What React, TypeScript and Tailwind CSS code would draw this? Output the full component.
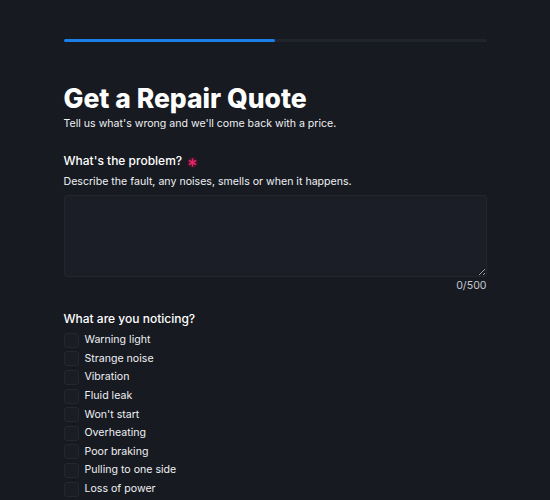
import React from "react";

const items = [
  "Warning light",
  "Strange noise",
  "Vibration",
  "Fluid leak",
  "Won't start",
  "Overheating",
  "Poor braking",
  "Pulling to one side",
  "Loss of power",
];

export default function App() {
  return (
    <div
      className="min-h-screen bg-[#171a21] text-[#f3f4f6]"
      style={{ fontFamily: "Inter, 'Liberation Sans', sans-serif" }}
    >
      <div className="mx-auto w-[423px] pt-[39px] pb-10">
        <div className="h-[3px] w-full rounded-full bg-[#20242d]">
          <div className="h-[3px] w-[50%] rounded-full bg-[#1a7fe6]" />
        </div>

        <h1 className="mt-[41px] text-[26.5px] font-extrabold leading-[31px] text-white">
          Get a Repair Quote
        </h1>
        <p className="mt-[3px] text-[10.6px] leading-[14px] text-[#eef0f3]">
          Tell us what's wrong and we'll come back with a price.
        </p>

        <div className="mt-[22px]">
          <div className="flex items-center gap-[5px] text-[12px] font-medium leading-[16px] text-white">
            <span>What's the problem?</span>
            <svg width="11" height="11" viewBox="0 0 11 11" className="mt-[2px]" aria-label="required">
              <circle cx="5.5" cy="5.5" r="5.5" fill="#3a1527" />
              <g stroke="#e8246a" strokeWidth="1.6" strokeLinecap="round">
                <line x1="5.5" y1="2" x2="5.5" y2="9" />
                <line x1="2.5" y1="3.75" x2="8.5" y2="7.25" />
                <line x1="2.5" y1="7.25" x2="8.5" y2="3.75" />
              </g>
            </svg>
          </div>
          <p className="mt-[6px] text-[10.6px] leading-[14px] text-[#eef0f3]">
            Describe the fault, any noises, smells or when it happens.
          </p>
          <textarea className="mt-[6px] block h-[82px] w-full resize-y rounded-[3px] border border-[#22262f] bg-[#1b1e26] outline-none" />
          <div className="mt-[2px] text-right text-[10.6px] leading-[14px] text-[#c5c9d1]">
            0/500
          </div>
        </div>

        <div className="mt-[18px]">
          <div className="text-[12px] font-medium leading-[16px] text-white">
            What are you noticing?
          </div>
          <div className="mt-[4px] flex flex-col">
            {items.map((t) => (
              <label key={t} className="flex h-[18.6px] items-center gap-[6px]">
                <span className="h-[15px] w-[15px] rounded-[3px] border border-[#232731] bg-[#1a1d24]" />
                <span className="text-[10.6px] leading-[14px] text-[#eef0f3]">{t}</span>
              </label>
            ))}
          </div>
        </div>
      </div>
    </div>
  );
}
